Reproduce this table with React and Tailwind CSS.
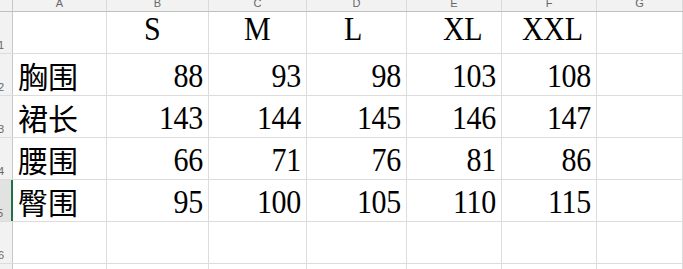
import React from 'react'

const cols = [
  { key: 'A', w: 'w-[94px]' },
  { key: 'B', w: 'w-[102px]' },
  { key: 'C', w: 'w-[98px]' },
  { key: 'D', w: 'w-[100px]' },
  { key: 'E', w: 'w-[95px]' },
  { key: 'F', w: 'w-[95px]' },
  { key: 'G', w: 'flex-1' },
]

const sizes = [
  { label: 'S', pad: 'pl-[37px]' },
  { label: 'M', pad: 'pl-[35px]' },
  { label: 'L', pad: 'pl-[37px]' },
  { label: 'XL', pad: 'pl-[36px]' },
  { label: 'XXL', pad: 'pl-[20px]' },
]

const rows = [
  ['胸围', 88, 93, 98, 103, 108],
  ['裙长', 143, 144, 145, 146, 147],
  ['腰围', 66, 71, 76, 81, 86],
  ['臀围', 95, 100, 105, 110, 115],
]

const font = "font-['Liberation_Serif','Noto_Sans_CJK_SC',serif]"

function RowHead({ n, active }) {
  return (
    <div
      className={`flex h-full w-[13px] shrink-0 items-end justify-end overflow-hidden pb-[2px] pr-[8px] font-['Liberation_Sans',sans-serif] text-[11px] leading-none text-[#666] ${
        active ? 'border-r-2 border-[#217346] bg-[#e2e2e2]' : 'border-r border-[#c8c8c8] bg-[#f2f2f2]'
      }`}
    >
      <span>{n}</span>
    </div>
  )
}

function Cell({ w, children, className = '' }) {
  return (
    <div className={`flex h-full shrink-0 items-end border-r border-[#dcdcdc] pb-[2px] ${w} ${className}`}>
      {children}
    </div>
  )
}

// latin text in the sheet is a bit taller than Times, stretch it slightly
function Tall({ children }) {
  return <span className="inline-block origin-bottom scale-y-[1.12] tracking-[-0.3px]">{children}</span>
}

export default function App() {
  return (
    <div className={`h-[269px] w-[683px] overflow-hidden bg-white text-[30px] leading-[30px] text-black ${font}`}>
      {/* column letters */}
      <div className="flex h-[12px] border-b border-[#bfbfbf] bg-[#f2f2f2]">
        <div className="w-[13px] shrink-0 border-r border-[#c8c8c8]" />
        {cols.map((c) => (
          <div
            key={c.key}
            className={`flex shrink-0 items-end justify-center border-r border-[#dadada] pb-[2px] font-['Liberation_Sans',sans-serif] text-[11px] leading-none text-[#666] ${c.w}`}
          >
            {c.key}
          </div>
        ))}
      </div>

      {/* header row */}
      <div className="flex h-[42px] border-b border-[#dcdcdc]">
        <RowHead n={1} />
        <Cell w={cols[0].w} />
        {sizes.map((s, i) => (
          <Cell key={s.label} w={cols[i + 1].w} className={`pb-[7px] ${s.pad}`}>
            <Tall>{s.label}</Tall>
          </Cell>
        ))}
        <Cell w={cols[6].w} />
      </div>

      {rows.map((r, ri) => (
        <div key={r[0]} className="flex h-[42px] border-b border-[#dcdcdc]">
          <RowHead n={ri + 2} active={ri === 3} />
          <Cell w={cols[0].w} className="pl-[5px]">
            {r[0]}
          </Cell>
          {r.slice(1).map((v, i) => (
            <Cell key={i} w={cols[i + 1].w} className="justify-end pr-[5px]">
              <Tall>{v}</Tall>
            </Cell>
          ))}
          <Cell w={cols[6].w} />
        </div>
      ))}

      {/* empty rows */}
      {[6, 7].map((n) => (
        <div key={n} className="flex h-[42px] border-b border-[#dcdcdc]">
          <RowHead n={n} />
          {cols.map((c) => (
            <Cell key={c.key} w={c.w} />
          ))}
        </div>
      ))}
    </div>
  )
}
